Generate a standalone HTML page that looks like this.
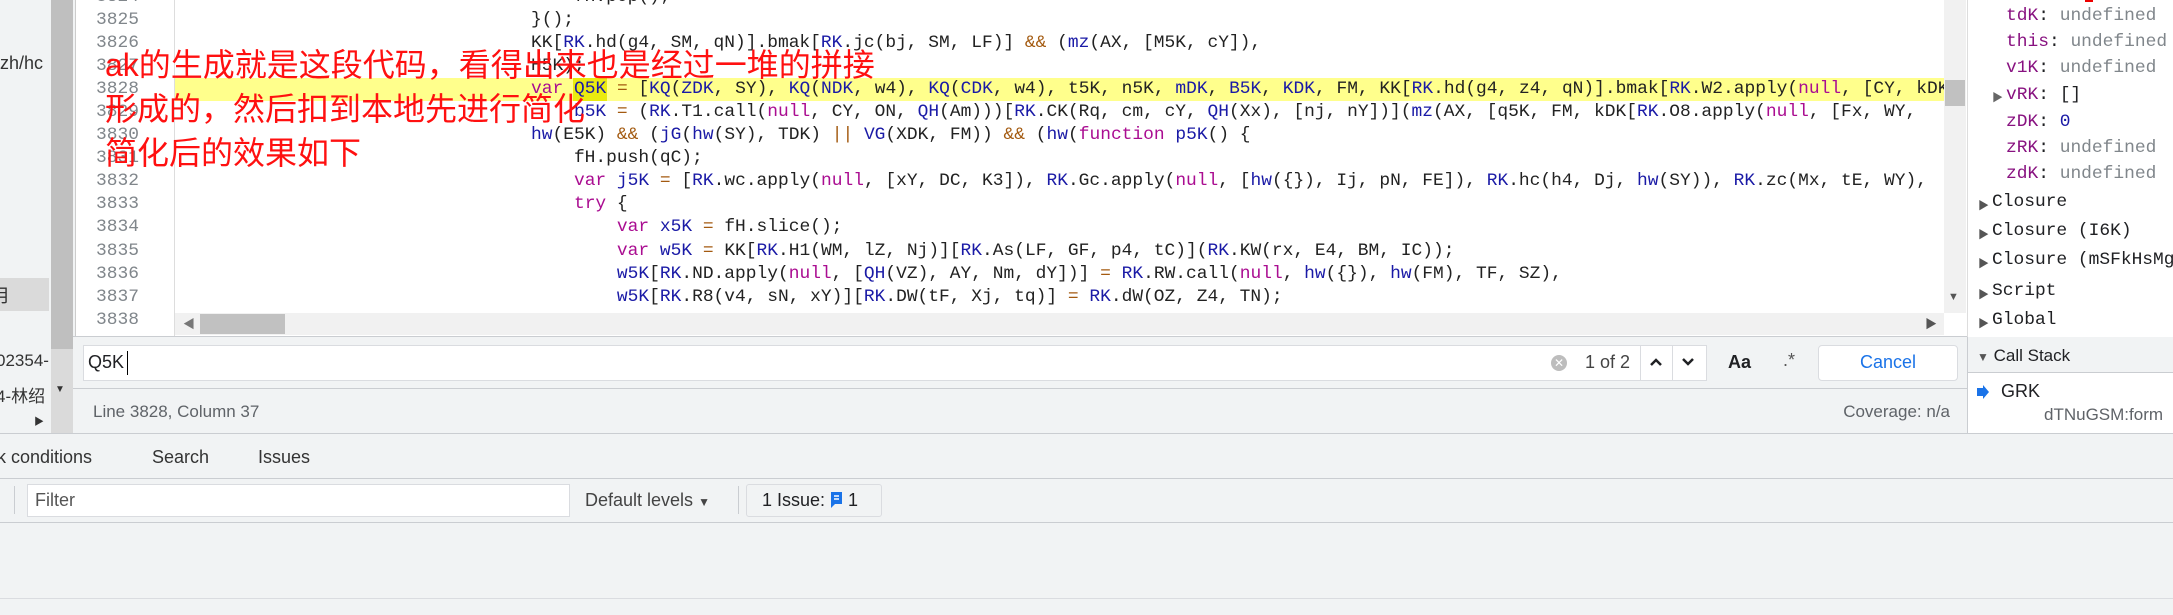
<!DOCTYPE html>
<html><head><meta charset="utf-8"><style>
*{margin:0;padding:0;box-sizing:border-box}
body{width:2173px;height:615px;overflow:hidden;background:#f1f3f4;position:relative;font-family:"Liberation Sans","Noto Sans CJK SC",sans-serif;color:#202124}
.a{position:absolute}
.m{font-family:"Liberation Mono","Noto Sans CJK SC",monospace;font-size:17.9px;white-space:pre}
.ln{position:absolute;left:76px;width:63px;text-align:right;color:#80868b;height:23px;line-height:23px}
.cl{position:absolute;left:531px;height:23px;line-height:23px;color:#222}
.k{color:#aa0d91}.v{color:#1a1aa6}.o{color:#a35a10}
.sc{position:absolute;height:23px;line-height:23px}
.t{font-size:17px;white-space:nowrap}
.hl{position:absolute;background:#fff;border:1px solid #dadce0}
</style></head><body>
<!-- left strip -->
<div class="a" style="left:0;top:0;width:51px;height:433px;background:#f1f3f4;overflow:hidden">
<div class="a t" style="left:-6px;top:53px;font-size:18px;color:#333">-zh/hc</div>
<div class="a" style="left:0;top:278px;width:49px;height:33px;background:#dadada"></div>
<div class="a t" style="left:-8px;top:282px;font-size:18px;color:#333">月</div>
<div class="a t" style="left:-4px;top:351px;font-size:17px;color:#333">02354-</div>
<div class="a t" style="left:-4px;top:382px;font-size:17px;color:#333">4-林绍</div>
<div class="a" style="left:34px;top:416px;width:16px;height:17px;background:#f1f3f4"></div>
</div>
<div class="a" style="left:51px;top:0;width:22px;height:433px;background:#dadada"></div>
<div class="a" style="left:51px;top:0;width:22px;height:349px;background:#bfbfbf"></div>
<div class="a" style="left:55px;top:384px;font-size:10px;color:#333">▼</div>
<div class="a" style="left:34px;top:413px;font-size:10px;color:#333">▶</div>
<!-- editor -->
<div class="a" style="left:75px;top:0;width:1892px;height:337px;background:#fff;border-left:1px solid #ccc;overflow:hidden">
</div>
<div class="a" style="left:174px;top:0;width:1px;height:337px;background:#ddd"></div>
<div class="a" style="left:175px;top:78px;width:1769px;height:23px;background:#ffff8c"></div>
<div class="a" style="left:573px;top:78px;width:34px;height:23px;background:#eaea10"></div>
<div class="m">
<div class="ln" style="top:-14px">3824</div>
<div class="ln" style="top:9px">3825</div>
<div class="ln" style="top:32px">3826</div>
<div class="ln" style="top:55px">3827</div>
<div class="ln" style="top:78px">3828</div>
<div class="ln" style="top:101px">3829</div>
<div class="ln" style="top:124px">3830</div>
<div class="ln" style="top:147px">3831</div>
<div class="ln" style="top:170px">3832</div>
<div class="ln" style="top:193px">3833</div>
<div class="ln" style="top:216px">3834</div>
<div class="ln" style="top:240px">3835</div>
<div class="ln" style="top:263px">3836</div>
<div class="ln" style="top:286px">3837</div>
<div class="ln" style="top:309px">3838</div>
</div>
<div class="a m" style="left:175px;top:0;width:1769px;height:313px;overflow:hidden">
<div style="position:absolute;left:-175px;top:0;width:2000px;height:313px">
<div class="cl" style="top:-14px">    fH.pop();</div>
<div class="cl" style="top:9px">}();</div>
<div class="cl" style="top:32px">KK[<span class="v">RK</span>.hd(g4, SM, qN)].bmak[<span class="v">RK</span>.jc(bj, SM, LF)] <span class="o">&amp;&amp;</span> (<span class="v">mz</span>(AX, [M5K, cY]),</div>
<div class="cl" style="top:55px">H5K);</div>
<div class="cl" style="top:78px"><span class="k">var</span> <span class="v">Q5K</span> <span class="o">=</span> [<span class="v">KQ</span>(<span class="v">ZDK</span>, SY), <span class="v">KQ</span>(<span class="v">NDK</span>, w4), <span class="v">KQ</span>(<span class="v">CDK</span>, w4), t5K, n5K, <span class="v">mDK</span>, <span class="v">B5K</span>, <span class="v">KDK</span>, FM, KK[<span class="v">RK</span>.hd(g4, z4, qN)].bmak[<span class="v">RK</span>.W2.apply(<span class="k">null</span>, [CY, kDK</div>
<div class="cl" style="top:101px">    <span class="v">b5K</span> <span class="o">=</span> (<span class="v">RK</span>.T1.call(<span class="k">null</span>, CY, ON, <span class="v">QH</span>(Am)))[<span class="v">RK</span>.CK(Rq, cm, cY, <span class="v">QH</span>(Xx), [nj, nY])](<span class="v">mz</span>(AX, [q5K, FM, kDK[<span class="v">RK</span>.O8.apply(<span class="k">null</span>, [Fx, WY, </div>
<div class="cl" style="top:124px"><span class="v">hw</span>(E5K) <span class="o">&amp;&amp;</span> (<span class="v">jG</span>(<span class="v">hw</span>(SY), TDK) <span class="o">||</span> <span class="v">VG</span>(XDK, FM)) <span class="o">&amp;&amp;</span> (<span class="v">hw</span>(<span class="k">function</span> <span class="v">p5K</span>() {</div>
<div class="cl" style="top:147px">    fH.push(qC);</div>
<div class="cl" style="top:170px">    <span class="k">var</span> <span class="v">j5K</span> <span class="o">=</span> [<span class="v">RK</span>.wc.apply(<span class="k">null</span>, [xY, DC, K3]), <span class="v">RK</span>.Gc.apply(<span class="k">null</span>, [<span class="v">hw</span>({}), Ij, pN, FE]), <span class="v">RK</span>.hc(h4, Dj, <span class="v">hw</span>(SY)), <span class="v">RK</span>.zc(Mx, tE, WY), </div>
<div class="cl" style="top:193px">    <span class="k">try</span> {</div>
<div class="cl" style="top:216px">        <span class="k">var</span> <span class="v">x5K</span> <span class="o">=</span> fH.slice();</div>
<div class="cl" style="top:240px">        <span class="k">var</span> <span class="v">w5K</span> <span class="o">=</span> KK[<span class="v">RK</span>.H1(WM, lZ, Nj)][<span class="v">RK</span>.As(LF, GF, p4, tC)](<span class="v">RK</span>.KW(rx, E4, BM, IC));</div>
<div class="cl" style="top:263px">        <span class="v">w5K</span>[<span class="v">RK</span>.ND.apply(<span class="k">null</span>, [<span class="v">QH</span>(VZ), AY, Nm, dY])] <span class="o">=</span> <span class="v">RK</span>.RW.call(<span class="k">null</span>, <span class="v">hw</span>({}), <span class="v">hw</span>(FM), TF, SZ),</div>
<div class="cl" style="top:286px">        <span class="v">w5K</span>[<span class="v">RK</span>.R8(v4, sN, xY)][<span class="v">RK</span>.DW(tF, Xj, tq)] <span class="o">=</span> <span class="v">RK</span>.dW(OZ, Z4, TN);</div>
</div></div>
<!-- h scrollbar -->
<div class="a" style="left:175px;top:313px;width:1769px;height:22px;background:#f1f1f1"></div>
<div class="a" style="left:200px;top:314px;width:85px;height:20px;background:#c1c1c1"></div>
<div class="a" style="left:183px;top:315px;font-size:12px;color:#777">◀</div>
<div class="a" style="left:1925px;top:315px;font-size:12px;color:#555">▶</div>
<!-- v scrollbar -->
<div class="a" style="left:1944px;top:0;width:22px;height:313px;background:#f1f1f1"></div>
<div class="a" style="left:1945px;top:80px;width:20px;height:26px;background:#c1c1c1"></div>
<div class="a" style="left:1948px;top:291px;font-size:11px;color:#555">▼</div>
<!-- red annotation -->
<div class="a" style="left:105px;top:43px;font-size:32px;line-height:44px;color:#ff1010;font-family:'Liberation Sans','Noto Sans CJK SC',sans-serif;white-space:nowrap">ak的生成就是这段代码，看得出来也是经过一堆的拼接<br>形成的，然后扣到本地先进行简化<br>简化后的效果如下</div>
<!-- right panel -->
<div class="a" style="left:1967px;top:0;width:206px;height:337px;background:#fff;border-left:1px solid #ddd"></div>
<div class="a" style="left:2085px;top:0;width:8px;height:2px;background:#e00"></div>
<div class="a m" style="left:2006px;top:0;width:170px;height:337px">
<div class="sc" style="left:0;top:5px"><span style="color:#881280">tdK</span>: <span style="color:#80868b">undefined</span></div>
<div class="sc" style="left:0;top:31px"><span style="color:#881280">this</span>: <span style="color:#80868b">undefined</span></div>
<div class="sc" style="left:0;top:57px"><span style="color:#881280">v1K</span>: <span style="color:#80868b">undefined</span></div>
<div class="sc" style="left:0;top:84px"><span style="color:#881280">vRK</span>: []</div>
<div class="sc" style="left:0;top:111px"><span style="color:#881280">zDK</span>: <span style="color:#1a1aa6">0</span></div>
<div class="sc" style="left:0;top:137px"><span style="color:#881280">zRK</span>: <span style="color:#80868b">undefined</span></div>
<div class="sc" style="left:0;top:163px"><span style="color:#881280">zdK</span>: <span style="color:#80868b">undefined</span></div>
<div class="sc" style="left:-14px;top:191px">Closure</div>
<div class="sc" style="left:-14px;top:220px">Closure (I6K)</div>
<div class="sc" style="left:-14px;top:249px">Closure (mSFkHsMg</div>
<div class="sc" style="left:-14px;top:280px">Script</div>
<div class="sc" style="left:-14px;top:309px">Global</div>
</div>
<div class="a" style="left:1992px;top:89px;font-size:11px;color:#666">▶</div>
<div class="a" style="left:1978px;top:197px;font-size:11px;color:#555">▶</div>
<div class="a" style="left:1978px;top:226px;font-size:11px;color:#555">▶</div>
<div class="a" style="left:1978px;top:255px;font-size:11px;color:#555">▶</div>
<div class="a" style="left:1978px;top:286px;font-size:11px;color:#555">▶</div>
<div class="a" style="left:1978px;top:315px;font-size:11px;color:#555">▶</div>
<!-- search bar -->
<div class="a" style="left:73px;top:336px;width:1894px;height:1px;background:#cacdd1"></div>
<div class="hl" style="left:83px;top:345px;width:1624px;height:36px"></div>
<div class="a t" style="left:88px;top:352px;font-size:18px">Q5K</div>
<div class="a" style="left:127px;top:351px;width:1px;height:24px;background:#000"></div>
<div class="a" style="left:1551px;top:355px;width:16px;height:16px;border-radius:50%;background:#bdbdbd;color:#fff;font-size:12px;line-height:16px;text-align:center">✕</div>
<div class="a t" style="left:1585px;top:352px;font-size:18px;color:#444">1 of 2</div>
<div class="a" style="left:1640px;top:346px;width:1px;height:34px;background:#dadce0"></div>
<div class="a" style="left:1672px;top:346px;width:1px;height:34px;background:#dadce0"></div>
<svg class="a" style="left:1649px;top:357px" width="14" height="10"><path d="M2 8 L7 3 L12 8" stroke="#202124" stroke-width="2.5" fill="none"/></svg>
<svg class="a" style="left:1681px;top:357px" width="14" height="10"><path d="M2 2 L7 7 L12 2" stroke="#202124" stroke-width="2.5" fill="none"/></svg>
<div class="a t" style="left:1728px;top:352px;font-size:18px;font-weight:bold">Aa</div>
<div class="a t" style="left:1783px;top:350px;font-size:18px;color:#555">.*</div>
<div class="hl" style="left:1818px;top:345px;width:140px;height:36px;border-radius:4px;"></div>
<div class="a t" style="left:1818px;top:352px;width:140px;text-align:center;font-size:18px;color:#1a73e8">Cancel</div>
<div class="a" style="left:73px;top:388px;width:1894px;height:1px;background:#cacdd1"></div>
<div class="a t" style="left:93px;top:402px;color:#5f6368">Line 3828, Column 37</div>
<div class="a t" style="left:1750px;top:402px;width:200px;text-align:right;color:#5f6368">Coverage: n/a</div>
<!-- call stack -->
<div class="a" style="left:1967px;top:337px;width:1px;height:96px;background:#cacdd1"></div>
<div class="a t" style="left:1977px;top:346px;color:#202124"><span style="font-size:12px;color:#555">▼</span> Call Stack</div>
<div class="a" style="left:1968px;top:372px;width:205px;height:61px;background:#fff;border-top:1px solid #cacdd1"></div>
<svg class="a" style="left:1977px;top:385px" width="12" height="14"><path d="M0 3 H6 V0 L12 7 L6 14 V11 H0Z" fill="#1a73e8"/></svg>
<div class="a t" style="left:2001px;top:381px;font-size:18px">GRK</div>
<div class="a t" style="left:2044px;top:405px;color:#5f6368">dTNuGSM:form</div>
<div class="a" style="left:0;top:433px;width:2173px;height:1px;background:#cacdd1"></div>
<!-- tabs -->
<div class="a t" style="left:-3px;top:447px;font-size:18px;color:#333">k conditions</div>
<div class="a t" style="left:152px;top:447px;font-size:18px;color:#333">Search</div>
<div class="a t" style="left:258px;top:447px;font-size:18px;color:#333">Issues</div>
<div class="a" style="left:0;top:478px;width:2173px;height:1px;background:#cacdd1"></div>
<!-- console toolbar -->
<div class="a" style="left:14px;top:486px;width:1px;height:28px;background:#cacdd1"></div>
<div class="hl" style="left:27px;top:484px;width:543px;height:33px"></div>
<div class="a t" style="left:35px;top:490px;font-size:18px;color:#555">Filter</div>
<div class="a t" style="left:585px;top:490px;font-size:18px;color:#444">Default levels <span style="font-size:12px">▼</span></div>
<div class="a" style="left:738px;top:486px;width:1px;height:28px;background:#cacdd1"></div>
<div class="a" style="left:746px;top:484px;width:136px;height:33px;border:1px solid #dadce0;border-radius:3px;background:#f1f3f4"></div>
<div class="a t" style="left:762px;top:490px;font-size:18px;color:#202124">1 Issue: <svg width="13" height="18" style="vertical-align:-3px"><path d="M1 1 H12 V13 H5 L1 17Z" fill="#1a73e8"/><path d="M4 5 H9 M4 8 H9" stroke="#fff" stroke-width="1.5"/></svg> 1</div>
<div class="a" style="left:0;top:522px;width:2173px;height:1px;background:#cacdd1"></div>
<div class="a" style="left:0;top:598px;width:2173px;height:1px;background:#dadce0"></div>
</body></html>
